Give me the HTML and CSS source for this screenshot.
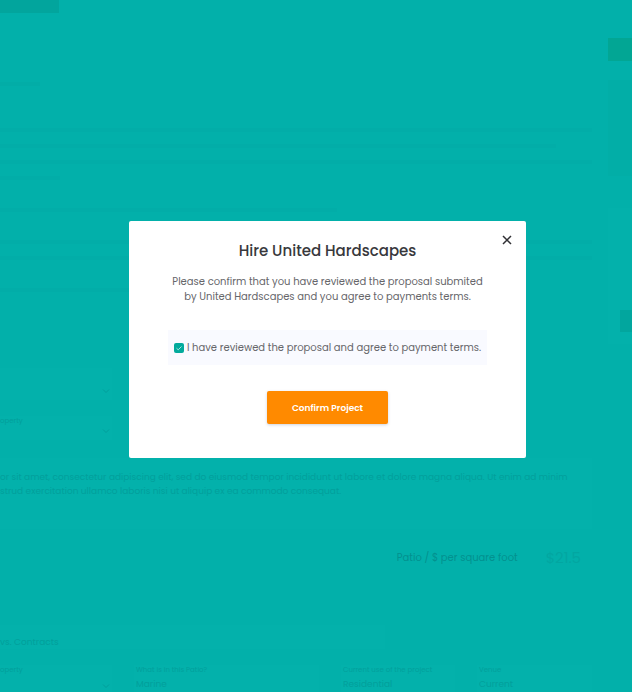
FILE: index.html
```html
<!DOCTYPE html>
<html lang="en">
<head>
<meta charset="utf-8">
<meta name="viewport" content="width=device-width, initial-scale=1">
<title>Hire United Hardscapes</title>
<link rel="stylesheet" href="styles.css">
</head>
<body>
<div class="page" inert>
  <main class="content">
    <div class="tab"></div>
    <div class="caption"></div>
    <div class="lines">
      <div class="line"></div>
      <div class="line line-wide"></div>
      <div class="line"></div>
      <div class="line line-tiny"></div>
    </div>
    <div class="lines">
      <div class="line line-half"></div>
      <div class="line blank"></div>
      <div class="line"></div>
      <div class="line"></div>
      <div class="line blank"></div>
      <div class="line line-half"></div>
    </div>
    <div class="choices">
      <div class="choice choice-tall">
        <svg class="chevron" viewBox="0 0 8 6"><path d="M1 1.500 4 4.500 7 1.500"/></svg>
      </div>
      <div class="choice">
        <span class="label">operty</span>
        <svg class="chevron" viewBox="0 0 8 6"><path d="M1 1.500 4 4.500 7 1.500"/></svg>
      </div>
    </div>
    <p class="note">or sit amet, consectetur adipiscing elit, sed do eiusmod tempor incididunt ut labore et dolore magna aliqua. Ut enim ad minim<br>strud exercitation ullamco laboris nisi ut aliquip ex ea commodo consequat.</p>
    <div class="rate"><span>Patio / $ per square foot</span><span class="price">$21.5</span></div>
    <div class="subtitle">vs. Contracts</div>
    <div class="fields">
      <div class="field field-first"><span class="label">operty</span><svg class="chevron" viewBox="0 0 8 6"><path d="M1 1.500 4 4.500 7 1.500"/></svg></div>
      <div class="field"><span class="label">What is in this Patio?</span><span>Marine</span></div>
      <div class="field"><span class="label">Current use of the project</span><span>Residential</span></div>
      <div class="field"><span class="label">Venue</span><span>Current</span></div>
    </div>
  </main>
  <aside class="side">
    <div class="side-button"></div>
    <div class="side-list"></div>
    <div class="side-card"><div class="side-action"></div></div>
  </aside>
</div>

<div class="overlay">
  <form class="modal" role="dialog" aria-modal="true" aria-labelledby="title">
    <button class="close" type="button" aria-label="Close">
      <svg viewBox="0 0 10 10"><path d="M1 1 9 9M9 1 1 9"/></svg>
    </button>
    <h1 class="title" id="title">Hire United Hardscapes</h1>
    <p class="message">Please confirm that you have reviewed the proposal submited<br>by United Hardscapes and you agree to payments terms.</p>
    <div class="agree">
      <span class="check">
        <input class="box" type="checkbox" id="agree" checked>
        <svg class="tick" viewBox="0 0 10 10"><path d="M2.500 5.200 4.200 6.800 7.500 3.500"/></svg>
      </span>
      <label for="agree">I have reviewed the proposal and agree to payment terms.</label>
    </div>
    <button class="confirm" type="button">Confirm Project</button>
  </form>
</div>
</body>
</html>
```

FILE: styles.css
```css
* {
  box-sizing: border-box;
}

body {
  margin: 0;
  background: #02b0aa;
  color: #66666a;
  font-family: Poppins, Inter, "Open Sans", sans-serif;
  font-size: 10px;
  line-height: 15px;
}

/* Dimmed page behind the dialog */
.page {
  display: grid;
  grid-template-columns: minmax(0, 1fr) 24px;
  gap: 16px;
  height: 100vh;
  overflow: hidden;
  color: #029f9b;
}

.tab {
  width: 59px;
  height: 13px;
  background: #02a59d;
}

.caption {
  width: 40px;
  height: 4px;
  margin: 69px 0 42px;
  background: #02ada7;
}

.lines {
  display: grid;
  gap: 12px;
  margin-bottom: 28px;
}

.line {
  height: 4px;
  background: #02ada8;
}

.line-wide {
  width: 94%;
}

.line-half {
  width: 57%;
}

.line-tiny {
  width: 60px;
}

.blank {
  visibility: hidden;
}

.choices {
  display: grid;
  gap: 16px;
  margin-top: 76px;
}

.choice {
  display: flex;
  align-items: flex-end;
  justify-content: flex-end;
  width: 112px;
  height: 24px;
  padding-bottom: 6px;
  background: #03b1ab;
}

.choice-tall {
  height: 32px;
}

.choice .label {
  align-self: flex-start;
  margin-right: auto;
}

.label {
  font-size: 7px;
  line-height: 10px;
}

.chevron {
  width: 8px;
  height: 6px;
  margin-right: 2px;
  fill: none;
  stroke: #029f9b;
}

.note {
  height: 71px;
  margin: 18px 0 0;
  padding: 12px 0;
  background: #03b1ab;
  font-size: 9px;
  line-height: 14px;
  white-space: nowrap;
}

.rate {
  display: flex;
  align-items: center;
  justify-content: flex-end;
  gap: 28px;
  height: 24px;
  margin-top: 16px;
  padding-right: 11px;
  color: #02918f;
}

.price {
  color: #02a6a1;
  font-size: 15px;
}

.subtitle {
  width: 65%;
  height: 24px;
  margin: 56px 0 16px;
  padding-top: 10px;
  background: #03b1ab;
  font-size: 9px;
}

.fields {
  display: grid;
  grid-template-columns: 112px 185px 114px 1fr;
  gap: 22px;
}

.field {
  display: grid;
  align-content: start;
  gap: 2px;
  height: 40px;
  padding-left: 2px;
  background: #03b1ab;
  font-size: 9px;
}

.field-first {
  gap: 8px;
  padding-left: 0;
}

.field-first .chevron {
  justify-self: end;
}

.side-button {
  height: 23px;
  margin-top: 38px;
  background: #02a694;
}

.side-list {
  height: 96px;
  margin: 19px 0 32px;
  background: #02aea7;
}

.side-card {
  display: flex;
  align-items: flex-end;
  justify-content: flex-end;
  height: 136px;
  padding-bottom: 12px;
  background: #03b1ab;
}

.side-action {
  width: 12px;
  height: 22px;
  background: #02a69e;
}

/* Dialog */
.overlay {
  position: fixed;
  inset: 0;
  display: grid;
  place-items: center;
  padding: 0 0 13px 23px;
}

.modal {
  position: relative;
  display: flex;
  flex-direction: column;
  align-items: center;
  width: 100%;
  max-width: 397px;
  padding: 18px 39px 34px;
  border-radius: 2px;
  background: #fff;
  text-align: center;
}

.close {
  position: absolute;
  top: 12px;
  right: 12px;
  display: grid;
  place-items: center;
  width: 14px;
  height: 14px;
  padding: 0;
  border: 0;
  background: none;
}

.close svg {
  width: 10px;
  height: 10px;
  fill: none;
  stroke: #303034;
  stroke-width: 1.5;
}

.title {
  margin: 0;
  color: #38383c;
  font-size: 15px;
  font-weight: 500;
  line-height: 24px;
}

.message {
  margin: 11px 0 26px;
}

.agree {
  display: flex;
  align-items: center;
  justify-content: center;
  gap: 3px;
  width: 100%;
  height: 35px;
  background: #f9faff;
  white-space: nowrap;
}

.check {
  display: grid;
  width: 10px;
  height: 10px;
}

.box,
.tick {
  grid-area: 1 / 1;
  width: 10px;
  height: 10px;
  margin: 0;
}

.box {
  appearance: none;
  border-radius: 2px;
}

.box:checked {
  background: #02aa9c;
}

.tick {
  fill: none;
  stroke: #a9e5df;
  pointer-events: none;
}

.confirm {
  width: 121px;
  height: 33px;
  margin-top: 26px;
  padding: 2px 0 0;
  border: 0;
  border-radius: 2px;
  background: #ff8a00;
  box-shadow: 0 1px 3px rgb(60 80 120 / 25%);
  color: #fff;
  font: inherit;
  font-size: 9px;
  font-weight: 600;
}
```
